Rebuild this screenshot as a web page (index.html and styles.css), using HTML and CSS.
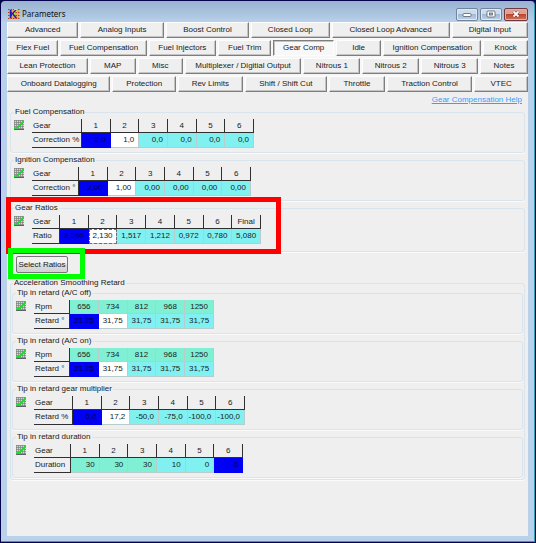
FILE: index.html
```html
<!DOCTYPE html>
<html lang="en">
<head>
<meta charset="utf-8">
<title>Parameters</title>
<link rel="stylesheet" href="styles.css">
</head>
<body>
<svg width="0" height="0" class="defs" aria-hidden="true">
  <symbol id="chart" viewBox="0 0 10 10">
    <rect width="10" height="10" fill="#d8d8d8"/>
    <path d="M0 .5H10M0 2.500H10M0 4.500H10M0 6.500H10M0 8.500H10M.5 0V10M2.500 0V10M4.500 0V10M6.500 0V10M8.500 0V10" stroke="#808080" stroke-width=".7"/>
    <path d="M0 9.500H10" stroke="#606060"/>
    <path d="M0 8.500L3.500 7.500L6.500 4.500L10 1" fill="none" stroke="#10e428" stroke-width="1.800"/>
  </symbol>
</svg>
<div class="window">
  <header class="titlebar">
    <svg class="app-icon" viewBox="0 0 12 12" aria-hidden="true">
      <rect x="1" y="1" width="10" height="10" fill="#e8a860"/>
      <path d="M0 1.500H12M0 4.500H12M0 7.500H12M0 10.500H12" stroke="#b83828" stroke-width="1.200" stroke-dasharray="1.500 1"/>
      <path d="M6 1H9V4H7V8H6Z" fill="#f8e020"/>
      <text x="1" y="10" class="app-letter">K</text>
    </svg>
    <h1>Parameters</h1>
    <div class="window-buttons">
      <button type="button" aria-label="Minimize"><svg viewBox="0 0 10 8"><rect x="1" y="3.500" width="8" height="3" rx="1" fill="#fff" stroke="#56606e" stroke-width=".8"/></svg></button>
      <button type="button" aria-label="Maximize"><svg viewBox="0 0 10 8"><rect x="1" y="1" width="8" height="6" rx="1" fill="#fff" stroke="#56606e" stroke-width=".8"/><rect x="3.500" y="3" width="3" height="2" fill="#a9bdd4" stroke="#56606e" stroke-width=".8"/></svg></button>
      <button type="button" class="close" aria-label="Close"><svg viewBox="0 0 10 8"><path d="M2.500 1.500L7.500 6.500M7.500 1.500L2.500 6.500" stroke="#6b3030" stroke-width="3"/><path d="M2.500 1.500L7.500 6.500M7.500 1.500L2.500 6.500" stroke="#fff" stroke-width="1.800"/></svg></button>
    </div>
  </header>
  <main class="client">
    <nav class="tabs">
      <div class="tab-row row-a">
        <button type="button">Advanced</button><button type="button">Analog Inputs</button><button type="button">Boost Control</button><button type="button">Closed Loop</button><button type="button">Closed Loop Advanced</button><button type="button">Digital Input</button>
      </div>
      <div class="tab-row row-b">
        <button type="button">Flex Fuel</button><button type="button">Fuel Compensation</button><button type="button">Fuel Injectors</button><button type="button">Fuel Trim</button><button type="button" class="active">Gear Comp</button><button type="button">Idle</button><button type="button">Ignition Compensation</button><button type="button">Knock</button>
      </div>
      <div class="tab-row row-c">
        <button type="button">Lean Protection</button><button type="button">MAP</button><button type="button">Misc</button><button type="button">Multiplexer / Digitial Output</button><button type="button">Nitrous 1</button><button type="button">Nitrous 2</button><button type="button">Nitrous 3</button><button type="button">Notes</button>
      </div>
      <div class="tab-row row-d">
        <button type="button">Onboard Datalogging</button><button type="button">Protection</button><button type="button">Rev Limits</button><button type="button">Shift / Shift Cut</button><button type="button">Throttle</button><button type="button">Traction Control</button><button type="button">VTEC</button>
      </div>
    </nav>
    <a class="help" href="#help">Gear Compensation Help</a>

    <div class="groups">
      <fieldset>
        <legend>Fuel Compensation</legend>
        <div class="grid">
          <svg class="chart"><use href="#chart"/></svg>
          <table class="cols-6 label-50">
            <tr><th class="name">Gear</th><th>1</th><th>2</th><th>3</th><th>4</th><th>5</th><th>6</th></tr>
            <tr><th class="name">Correction %</th><td class="sel">2,0</td><td class="focus">1,0</td><td>0,0</td><td>0,0</td><td>0,0</td><td>0,0</td></tr>
          </table>
        </div>
      </fieldset>
      <fieldset>
        <legend>Ignition Compensation</legend>
        <div class="grid">
          <svg class="chart"><use href="#chart"/></svg>
          <table class="cols-6 label-47">
            <tr><th class="name">Gear</th><th>1</th><th>2</th><th>3</th><th>4</th><th>5</th><th>6</th></tr>
            <tr><th class="name">Correction °</th><td class="sel">2,00</td><td class="focus">1,00</td><td>0,00</td><td>0,00</td><td>0,00</td><td>0,00</td></tr>
          </table>
        </div>
      </fieldset>
      <fieldset class="marked-red">
        <legend>Gear Ratios</legend>
        <div class="grid">
          <svg class="chart"><use href="#chart"/></svg>
          <table class="cols-7 label-28 centered">
            <tr><th class="name">Gear</th><th>1</th><th>2</th><th>3</th><th>4</th><th>5</th><th>6</th><th>Final</th></tr>
            <tr><th class="name">Ratio</th><td class="sel">3,266</td><td class="focus dotted">2,130</td><td>1,517</td><td>1,212</td><td>0,972</td><td>0,780</td><td>5,080</td></tr>
          </table>
        </div>
      </fieldset>
      <div class="marked-green"><button type="button" class="push">Select Ratios</button></div>
      <fieldset class="outer">
        <legend>Acceleration Smoothing Retard</legend>
        <fieldset>
          <legend>Tip in retard (A/C off)</legend>
          <div class="grid">
            <svg class="chart"><use href="#chart"/></svg>
            <table class="cols-5 label-36 centered">
              <tr><th class="name">Rpm</th><td class="mint">656</td><td class="mint">734</td><td class="mint">812</td><td class="mint">968</td><td class="mint">1250</td></tr>
              <tr><th class="name">Retard °</th><td class="sel">21,25</td><td class="focus">31,75</td><td>31,75</td><td>31,75</td><td>31,75</td></tr>
            </table>
          </div>
        </fieldset>
        <fieldset>
          <legend>Tip in retard (A/C on)</legend>
          <div class="grid">
            <svg class="chart"><use href="#chart"/></svg>
            <table class="cols-5 label-36 centered">
              <tr><th class="name">Rpm</th><td class="mint">656</td><td class="mint">734</td><td class="mint">812</td><td class="mint">968</td><td class="mint">1250</td></tr>
              <tr><th class="name">Retard °</th><td class="sel">21,25</td><td class="focus">31,75</td><td>31,75</td><td>31,75</td><td>31,75</td></tr>
            </table>
          </div>
        </fieldset>
        <fieldset>
          <legend>Tip in retard gear multiplier</legend>
          <div class="grid">
            <svg class="chart"><use href="#chart"/></svg>
            <table class="cols-6 label-39">
              <tr><th class="name">Gear</th><th>1</th><th>2</th><th>3</th><th>4</th><th>5</th><th>6</th></tr>
              <tr><th class="name">Retard %</th><td class="sel">0,0</td><td class="focus">17,2</td><td>-50,0</td><td>-75,0</td><td>-100,0</td><td>-100,0</td></tr>
            </table>
          </div>
        </fieldset>
        <fieldset>
          <legend>Tip in retard duration</legend>
          <div class="grid">
            <svg class="chart"><use href="#chart"/></svg>
            <table class="cols-6 label-37">
              <tr><th class="name">Gear</th><th>1</th><th>2</th><th>3</th><th>4</th><th>5</th><th>6</th></tr>
              <tr><th class="name">Duration</th><td class="mint">30</td><td class="mint">30</td><td class="mint">30</td><td>10</td><td>0</td><td class="sel">0</td></tr>
            </table>
          </div>
        </fieldset>
      </fieldset>
    </div>
  </main>
</div>
</body>
</html>
```
FILE: styles.css
```css
*, *::after { box-sizing: border-box; }

body {
  margin: 0;
  min-height: 100vh;
  display: flex;
  padding: 1px;
  background: #04044e;
  font: 8px/10px "Liberation Sans", Arial, sans-serif;
  color: #202020;
}

.defs { position: absolute; }

button { font: inherit; color: inherit; padding: 0; margin: 0; }

.window {
  flex: 1;
  display: flex;
  flex-direction: column;
  padding: 0 6px 5px;
  border-radius: 4px 4px 0 0;
  border-right: 1px solid #2fa0b4;
  border-bottom: 1px solid #2fa0b4;
  background: linear-gradient(#98b2d0, #b9d1ea 22px);
}

.titlebar {
  display: flex;
  align-items: center;
  height: 21px;
  padding: 5px 0 0 1px;
}

.app-icon { width: 12px; height: 12px; }
.app-letter { font: bold 11px "Liberation Sans", sans-serif; fill: #0c1cb4; }

h1 {
  flex: 1;
  margin: 0 0 0 2px;
  font: 8px/12px "Noto Sans", sans-serif;
  color: #101010;
}

.window-buttons { display: flex; gap: 2px; }

.window-buttons button {
  display: flex;
  align-items: center;
  justify-content: center;
  width: 22px;
  height: 13px;
  border: 1px solid #71849c;
  border-radius: 2px;
  background: linear-gradient(#ccdcec 45%, #a2b9d2 50%, #bcd2e8);
  box-shadow: inset 0 0 0 1px #dfeaf5;
}

.window-buttons .close {
  width: 24px;
  border-color: #6d3a40;
  background: linear-gradient(#dfa195 45%, #c1452c 50%, #d0765c);
  box-shadow: inset 0 0 0 1px #e4b0a6;
}

.window-buttons svg { width: 10px; height: 8px; }

.client { flex: 1; background: #efefef; }

.tabs { display: grid; gap: 2px; background: #f7f7f7; }
.tab-row { display: grid; gap: 2px; }
.row-a { grid-template-columns: 72fr 84fr 84fr 79fr 119fr 77fr; }
.row-b { grid-template-columns: 52fr 87fr 68fr 54fr 61fr 46fr 99fr 45fr; }
.row-c { grid-template-columns: 81fr 46fr 45fr 117fr 57fr 57fr 57fr 48fr; }
.row-d { grid-template-columns: 104fr 64fr 65fr 83fr 56fr 86fr 54fr; }

.tab-row button {
  min-width: 0;
  height: 16px;
  border: 1px solid #fdfdfd;
  border-right-color: #7e7e7e;
  border-bottom-color: #7e7e7e;
  background: #efefef;
  box-shadow: inset -1px -1px #c4c4c4;
  white-space: nowrap;
}

.tab-row .active {
  border-color: #7e7e7e #fdfdfd #fdfdfd #7e7e7e;
  background: #f8f8f8;
  box-shadow: inset 1px 1px #c4c4c4;
}

.help {
  display: block;
  width: max-content;
  margin: 3px 6px 0 auto;
  color: #3c9cff;
}

.groups { padding: 2px 3px 0; }

fieldset {
  position: relative;
  min-width: 0;
  margin: 0 0 2px;
  padding: 2px 2px 4px;
  border: 1px solid #d9e4ec;
  border-radius: 3px;
  box-shadow: 0 1px #fafafa;
}

legend { height: 10px; margin-left: 1px; padding: 0 1px; }

.outer { padding: 0 1px 1px; }
.outer fieldset:last-child { margin-bottom: 0; }

.grid { display: flex; gap: 8px; padding-left: 1px; }
.chart { width: 10px; height: 10px; margin-top: 1px; }

table { table-layout: fixed; border-collapse: separate; border-spacing: 0; }
.cols-5 { width: 180px; }
.cols-6 { width: 222px; }
.cols-7 { width: 229px; }
.label-28 .name { width: 28px; }
.label-36 .name { width: 36px; }
.label-37 .name { width: 37px; }
.label-39 .name { width: 39px; }
.label-47 .name { width: 47px; }
.label-50 .name { width: 50px; }
.label-47 { width: 219px; }
.label-39 { width: 211px; }
.label-37 { width: 209px; }

th, td {
  height: 14px;
  padding: 0;
  white-space: nowrap;
  font-weight: normal;
}

tr:last-child > * { height: 15px; }

th {
  border-right: 1px solid #303030;
  border-bottom: 1px solid #303030;
  background: #efefef;
  text-align: center;
}

.name { padding-left: 1px; text-align: left; }

td {
  padding-right: 4px;
  border-right: 1px solid #b8cccc;
  border-bottom: 1px solid #b8cccc;
  background: #80f0f0;
  text-align: right;
}

.centered td { padding: 0; text-align: center; }
.mint { background: #80f0d4; }
.focus { background: #fff; }
.dotted { outline: 1px dashed #707070; outline-offset: -1px; }
.sel { background: #0000f4; border-color: #0000f4; color: #000050; }

.marked-red { padding-bottom: 7px; }

.marked-red::after {
  content: "";
  position: absolute;
  left: -5px;
  top: -16px;
  width: 275px;
  height: 57px;
  border: 5px solid #f00;
  pointer-events: none;
}

.marked-green {
  position: relative;
  width: max-content;
  margin: 4px 0 5px 6px;
}

.marked-green::after {
  content: "";
  position: absolute;
  inset: -8px -17px -6px -8px;
  border: 5px solid #0f0;
  pointer-events: none;
}

.push {
  display: block;
  width: 52px;
  height: 17px;
  border: 1px solid #777;
  border-radius: 2px;
  background: linear-gradient(#f2f2f2 50%, #dedede 50%, #d2d2d2);
  white-space: nowrap;
}
```
